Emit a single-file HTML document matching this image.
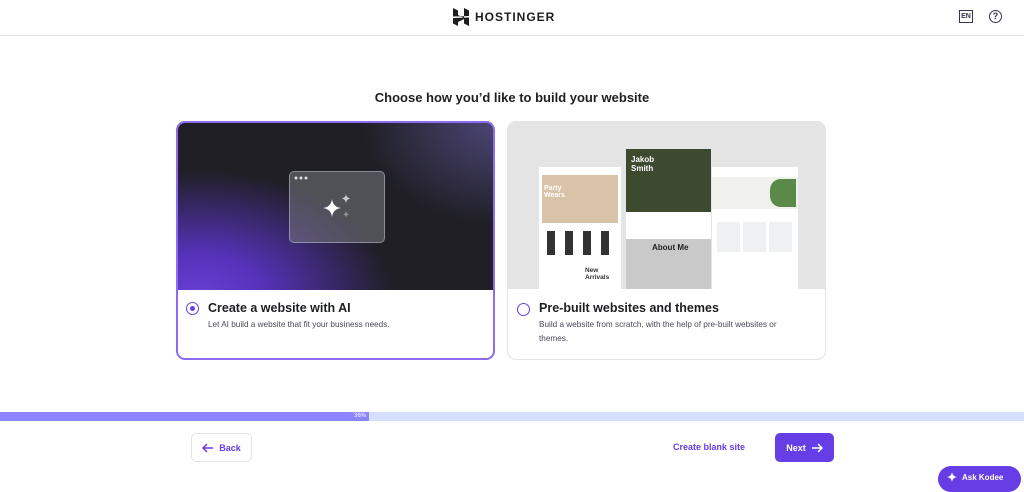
<!DOCTYPE html>
<html><head><meta charset="utf-8"><style>
*{box-sizing:border-box;margin:0;padding:0}
body{width:1024px;height:484px;overflow:hidden;background:#fff;font-family:"Liberation Sans",sans-serif;color:#2f1c6a;position:relative}
.hdr{position:absolute;left:0;top:0;width:1024px;height:36px;border-bottom:1px solid #e6e6ea}
.logo{position:absolute;left:453px;top:8px;display:flex;align-items:center;gap:6px;font-weight:bold;font-size:12px;letter-spacing:1px;color:#1d1e20}
.en{position:absolute;left:959px;top:10px;width:14px;height:13px;border:1.3px solid #36344d;font-size:7px;font-weight:bold;text-align:center;line-height:11px;color:#36344d}
.q{position:absolute;left:989px;top:10px;width:13px;height:13px;border:1.5px solid #36344d;border-radius:50%;font-size:9px;font-weight:bold;text-align:center;line-height:10px;color:#36344d}
h1{position:absolute;left:0;width:1024px;top:90px;text-align:center;font-size:13px;font-weight:bold;color:#1d1e20}
.card{position:absolute;top:121px;width:319px;height:239px;border-radius:9px;overflow:hidden;background:#fff}
.c1{left:176px;border:2px solid #8c6cf2}
.c2{left:507px;border:1px solid #e3e3e8}
.img{position:absolute;left:0;top:0;width:100%;height:167px}
.c1 .img{background:radial-gradient(ellipse 230px 150px at 20px 175px,#6a3fd6 0%,#5532b8 30%,rgba(31,31,37,0) 85%),radial-gradient(ellipse 160px 120px at 320px 0px,#4d4676 0%,rgba(31,31,37,0) 85%),#1f1f25}
.c2 .img{background:#e4e4e4}
.rad{position:absolute;left:9px;top:181px;width:13px;height:13px;border-radius:50%;border:1.5px solid #673de6}
.c1 .rad{left:8px;top:179px}
.c1 .rad::after{content:"";position:absolute;left:2.5px;top:2.5px;width:5px;height:5px;border-radius:50%;background:#673de6}
.t{position:absolute;left:31px;top:179px;font-size:12.5px;font-weight:bold;color:#1d1e20}
.c1 .t{left:30px;top:178px}
.d{position:absolute;left:31px;top:196px;font-size:8.2px;color:#4a4858;line-height:14px;width:262px}
.c1 .d{left:30px;top:195px}
.win{position:absolute;left:111px;top:48px;width:96px;height:72px;border-radius:5px;background:rgba(120,120,130,.55);border:1px solid rgba(200,200,220,.5)}
.bar{position:absolute;left:0;top:412px;width:1024px;height:9px;background:#d5dffe}
.fill{position:absolute;left:0;top:0;width:369px;height:9px;background:#8c85ff;font-size:6px;color:#fff;text-align:right;padding-right:3px;line-height:9px}
.btn{position:absolute;top:433px;height:29px;border-radius:5px;font-size:9px;font-weight:bold;display:flex;align-items:center;justify-content:center;gap:5px}
.back{left:191px;width:61px;border:1px solid #e3e3e8;color:#673de6}
.next{left:775px;width:59px;background:#673de6;color:#fff}
.blank{position:absolute;left:673px;top:442px;font-size:9px;font-weight:bold;color:#673de6}
.kodee{position:absolute;left:938px;top:466px;width:83px;height:26px;border-radius:13px;background:#673de6;color:#fff;font-size:8px;font-weight:bold;padding:7px 0 0 24px}
.pg{position:absolute;background:#fff}
</style></head><body>
<div class="hdr">
<div class="logo"><svg width="16" height="18" viewBox="0 0 16 18"><path d="M0 0l5 2.5v4.5l6 3V0l5 2.5V8L0 8.5zM0 10l16-.5V18l-5-2.5V11l-6 3v4L0 15.5z" fill="#1d1e20"/></svg>HOSTINGER</div>
<div class="en">EN</div><div class="q">?</div>
</div>
<h1>Choose how you’d like to build your website</h1>
<div class="card c1"><div class="img">
<div class="win"><svg width="96" height="72" style="position:absolute;left:0;top:0"><circle cx="6" cy="6" r="1.5" fill="#ddd"/><circle cx="11" cy="6" r="1.5" fill="#ddd"/><circle cx="16" cy="6" r="1.5" fill="#ddd"/><path d="M42 27q1 8 9 9q-8 1-9 9q-1-8-9-9q8-1 9-9z" fill="#fff"/><path d="M56 22q.5 4 4.5 4.5q-4 .5-4.5 4.5q-.5-4-4.5-4.5q4-.5 4.5-4.5z" fill="#ccc"/><path d="M56 39q.4 3 3 3.4q-2.6.4-3 3q-.4-2.6-3-3q2.6-.4 3-3.4z" fill="#999"/></svg></div>
</div><div class="rad"></div><div class="t">Create a website with AI</div><div class="d">Let AI build a website that fit your business needs.</div></div>
<div class="card c2"><div class="img">
<div class="pg" style="left:31px;top:45px;width:82px;height:122px"><div style="position:absolute;left:3px;top:8px;width:76px;height:48px;background:#d8c3a8"></div><div style="position:absolute;left:5px;top:18px;color:#fff;font-size:7px;font-weight:bold">Party<br>Wears</div><div style="position:absolute;left:8px;top:64px;width:64px;height:24px;background:repeating-linear-gradient(90deg,#333 0 8px,#fff 8px 18px)"></div><div style="position:absolute;left:46px;top:100px;font-size:6.5px;font-weight:bold;color:#333">New<br>Arrivals</div></div>
<div class="pg" style="left:118px;top:27px;width:85px;height:140px"><div style="position:absolute;left:0;top:0;width:85px;height:63px;background:#3e4a30"></div><div style="position:absolute;left:5px;top:6px;color:#fff;font-size:8px;font-weight:bold">Jakob<br>Smith</div><div style="position:absolute;left:0;top:90px;width:85px;height:50px;background:#c9c9c9"></div><div style="position:absolute;left:26px;top:94px;font-size:8px;font-weight:bold;color:#222">About Me</div></div>
<div class="pg" style="left:204px;top:45px;width:86px;height:122px"><div style="position:absolute;left:0;top:10px;width:86px;height:32px;background:#f0f0ec"></div><div style="position:absolute;left:58px;top:12px;width:26px;height:28px;background:#5a8a4a;border-radius:40% 0 0 40%"></div><div style="position:absolute;left:5px;top:55px;width:76px;height:30px;background:repeating-linear-gradient(90deg,#eef0f2 0 23px,#fff 23px 26px)"></div></div>
</div><div class="rad"></div><div class="t">Pre-built websites and themes</div><div class="d">Build a website from scratch, with the help of pre-built websites or themes.</div></div>
<div class="bar"><div class="fill">36%</div></div>
<div class="btn back"><svg width="12" height="10" viewBox="0 0 12 10"><path d="M11 5H1M5 1L1 5l4 4" stroke="#673de6" stroke-width="1.5" fill="none"/></svg>Back</div>
<div class="blank">Create blank site</div>
<div class="btn next">Next<svg width="12" height="10" viewBox="0 0 12 10"><path d="M1 5h10M7 1l4 4-4 4" stroke="#fff" stroke-width="1.5" fill="none"/></svg></div>
<div class="kodee"><svg width="10" height="10" style="position:absolute;left:9px;top:6px" viewBox="0 0 10 10"><path d="M5 0q.6 4.4 5 5q-4.4.6-5 5q-.6-4.4-5-5q4.4-.6 5-5z" fill="#fff"/></svg>Ask Kodee</div>
</body></html>
